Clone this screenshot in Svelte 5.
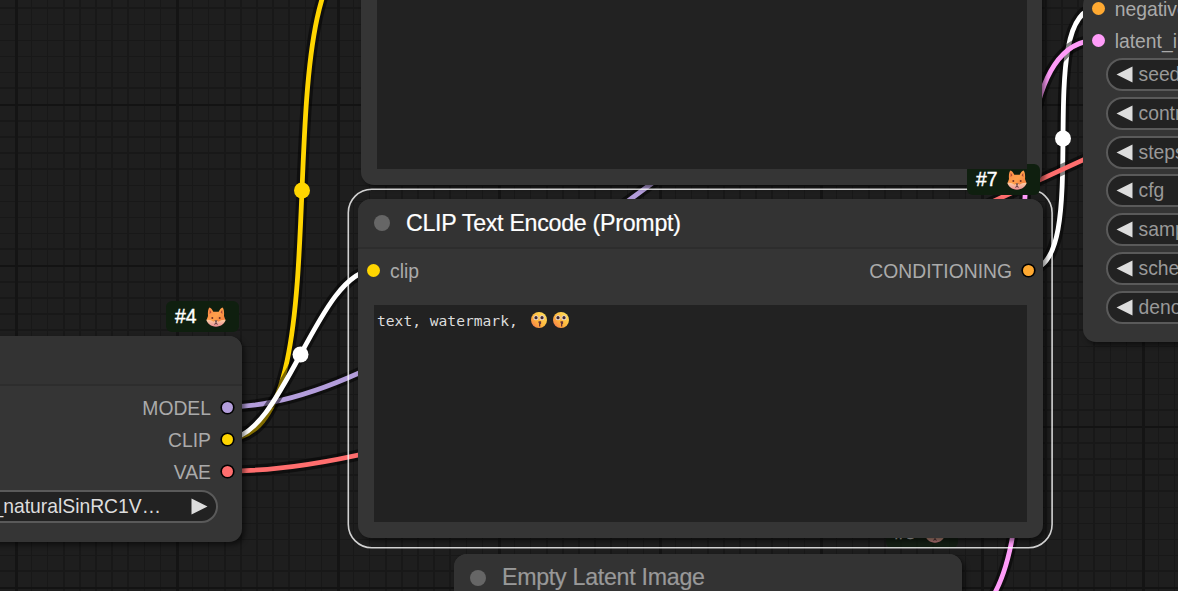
<script>
  const gridX = [31, 47, 63, 79, 95, 111, 127, 144, 160];
  const gridY = [120, 136, 152, 168, 185, 201, 217, 233, 249];
  const lines = [];
  for (let t = -1; t < 8; t++) {
    gridX.forEach((v, i) => lines.push({ x: v + t * 161, y: 0, w: i > 1 && i < 7 ? 2 : 1, h: 591, c: '#181818' }));
    gridY.forEach((v, i) => lines.push({ x: 0, y: v + (t - 2) * 161 + (i === 8 ? -1 : 0), w: 1178, h: i < 4 || i === 8 ? 2 : 1, c: '#181818' }));
  }
  for (let t = 0; t < 8; t++) {
    lines.push({ x: 15 + t * 161, y: 0, w: 3, h: 591, c: '#141414' });
    lines.push({ x: 0, y: 104 + t * 161, w: 1178, h: 2, c: '#131313' });
  }

  const links = [
    { d: 'M1028 270C1096 270 1030 8 1098 8', c: '#fff' },
    { d: 'M227 471C605 471 1278 -20 1656 -20', c: '#ff6e6e' },
    { d: 'M947 625C1098 625 947 40 1098 40', c: '#ff9cf9' },
    { d: 'M227 439C357 439 247 -59 377 -59', c: '#ffd500' },
    { d: 'M227 407C474 407 851 -56 1098 -56', c: '#b39ddb' },
    { d: 'M227 439C283 439 318 270 374 270', c: '#fff' }
  ];
  const dots = [
    { x: 302, y: 190.5, c: '#ffd500' },
    { x: 300.5, y: 354.5, c: '#fff' },
    { x: 1063, y: 138.5, c: '#fff' }
  ];
  const outputs = [
    { name: 'MODEL', c: '#b39ddb' },
    { name: 'CLIP', c: '#ffd500' },
    { name: 'VAE', c: '#ff6e6e' }
  ];
  const widgets = ['seed', 'control_after_generate', 'steps', 'cfg', 'sampler_name', 'scheduler', 'denoise'];
</script>

{#snippet badge(id, cls)}
  <div class="badge {cls}">
    <span>#{id}</span>
    <svg class="fox" viewBox="0 0 20 20">
      <defs>
        <linearGradient id="fur{id}" x1="0" y1="0" x2="1" y2="1">
          <stop offset="0" stop-color="#ff8a45" />
          <stop offset=".5" stop-color="#ffa04c" />
          <stop offset="1" stop-color="#ef6c35" />
        </linearGradient>
        <linearGradient id="cheek{id}" x1="0" y1="0" x2="0" y2="1">
          <stop offset="0" stop-color="#ffd0a4" />
          <stop offset="1" stop-color="#eb8c94" />
        </linearGradient>
      </defs>
      <path d="M2 9C1.600 5 2.200 1.500 3.400.4 4.900.9 6.600 2.800 7.300 4.700h5.400C13.400 2.800 15.100.9 16.600.4 17.800 1.500 18.400 5 18 9l1.400 4-4 5H4.600l-4-5z" fill="url(#fur{id})" />
      <path d="M3.700 3c.8.6 1.400 1.500 1.700 2.500L3.600 7zM16.300 3c-.8.6-1.400 1.500-1.700 2.500L16.400 7z" fill="#b54c38" />
      <path d="M.3 12.800c2.700-.3 5.500.5 7.300 1.900L10 13.200l2.400 1.500c1.800-1.400 4.600-2.200 7.300-1.900-.8 3.500-4.700 6.900-9.700 6.900S1.100 16.300.3 12.800z" fill="url(#cheek{id})" />
      <circle cx="6.300" cy="11" r="1" fill="#713128" />
      <circle cx="13.700" cy="11" r="1" fill="#713128" />
      <path d="M8.500 13.500h3L10 15.300z" fill="#35232c" />
      <path d="M10 15v1.600M8.300 17.300l1.700-.8 1.700.8" fill="none" stroke="#4b2933" stroke-width=".9" />
    </svg>
  </div>
{/snippet}

{#snippet face(n)}
  <svg class="face" viewBox="0 0 16 16">
    <defs>
      <linearGradient id="skin{n}" x1="1" y1="0" x2="0" y2="1">
        <stop offset="0" stop-color="#ffe860" />
        <stop offset=".6" stop-color="#ffb13a" />
        <stop offset="1" stop-color="#f36f55" />
      </linearGradient>
    </defs>
    <circle cx="8" cy="8" r="8" fill="url(#skin{n})" />
    <circle cx="5" cy="5.700" r="2.500" fill="#e9d8d0" />
    <circle cx="11" cy="5.700" r="2.500" fill="#e9d8d0" />
    <circle cx="5" cy="5.700" r="1.600" fill="#402a32" />
    <circle cx="11" cy="5.700" r="1.600" fill="#402a32" />
    <path d="M7.500 9.200h2.600v2.500l-.8.600v2.100H8v-3.200l-.5-.3z" fill="#67353a" />
  </svg>
{/snippet}

<div class="canvas">
  <svg class="layer" width="1178" height="591">
    <rect width="1178" height="591" fill="#1e1e1e" />
    <g shape-rendering="crispEdges">
      {#each lines as l}
        <rect x={l.x} y={l.y} width={l.w} height={l.h} fill={l.c} />
      {/each}
    </g>
    <g fill="none">
      {#each links as l}
        <path d={l.d} stroke="#000" stroke-opacity=".5" stroke-width="11.300" />
        <path d={l.d} stroke={l.c} stroke-width="4.800" />
      {/each}
    </g>
    {#each dots as p}
      <circle cx={p.x} cy={p.y} r="8" fill={p.c} />
    {/each}
  </svg>

  <section class="node loader">
    <header></header>
    <div class="rows">
      {#each outputs as o}
        <div class="slot out">
          <span>{o.name}</span>
          <i class="pin ring" style="background:{o.c}"></i>
        </div>
      {/each}
    </div>
    <div class="pill value">
      <span>juggernautXL_naturalSinRC1V…</span>
      <svg width="17" height="17"><path d="M.5.500L16.500 8.500L.5 16.500z" fill="#ddd" /></svg>
    </div>
  </section>
  {@render badge(4, 'b4')}

  <section class="node positive"></section>

  <section class="node sampler">
    <div class="slot"><i class="pin" style="background:#ffa931"></i><span>negative</span></div>
    <div class="slot"><i class="pin" style="background:#ff9cf9"></i><span>latent_image</span></div>
    <div class="stack">
      {#each widgets as w}
        <div class="pill">
          <svg width="17" height="17"><path d="M16.500.500L.5 8.500L16.500 16.500z" fill="#ddd" /></svg>
          <span>{w}</span>
        </div>
      {/each}
    </div>
  </section>

  <section class="node latent">
    <header><i class="state"></i><h2>Empty Latent Image</h2></header>
  </section>
  {@render badge(5, 'b5')}

  <section class="node encode">
    <header><i class="state"></i><h2>CLIP Text Encode (Prompt)</h2></header>
    <div class="slot both">
      <i class="pin" style="background:#ffd500"></i>
      <span>clip</span>
      <span class="right">CONDITIONING</span>
      <i class="pin ring" style="background:#ffa931"></i>
    </div>
    <div class="prompt"><span>text, watermark,</span>{@render face(1)}{@render face(2)}</div>
  </section>
  <svg class="layer" width="1178" height="591">
    <rect x="348.300" y="189.200" width="703.800" height="358.500" rx="23.500" fill="none" stroke="#fff" stroke-opacity=".8" stroke-width="1.610" />
  </svg>
  {@render badge(7, 'b7')}
  <div class="upper-prompt"></div>
</div>

<style>
  :global(body) { background: #1e1e1e; overflow: hidden; }
  .canvas {
    position: relative;
    width: 1178px;
    height: 591px;
    overflow: hidden;
    font-family: "Liberation Sans", Arial, sans-serif;
    font-size: 19.32px;
    color: #aaa;
    white-space: nowrap;
  }
  .layer { position: absolute; inset: 0; }
  .node {
    position: absolute;
    box-sizing: border-box;
    background: #353535;
    border-radius: 13px;
    box-shadow: 3px 3px 5px rgba(0, 0, 0, .5);
  }
  header {
    height: 48px;
    box-sizing: content-box;
    border-bottom: 2px solid #2d2d2d;
    background: #333;
    border-radius: 13px 13px 0 0;
    display: flex;
    align-items: center;
    padding-left: 16px;
    gap: 16px;
  }
  h2 {
    margin: 0;
    font-size: 23.200px;
    letter-spacing: -.27px;
    font-weight: 400;
    line-height: 48px;
    position: relative;
    top: -.5px;
    -webkit-text-stroke: .2px currentColor;
  }
  .state { width: 16px; height: 16px; border-radius: 50%; background: #666; }
  .slot { display: flex; align-items: center; height: 32.200px; line-height: 32.200px; }
  .slot span { position: relative; top: 1.500px; }
  .pin { width: 13px; height: 13px; border-radius: 50%; flex: none; }
  .pin.ring { width: 11px; height: 11px; margin: 0 1.500px; box-shadow: 0 0 0 1.600px #000; }

  .loader { left: -267px; top: 336px; width: 509px; height: 206px; }
  .rows { padding: 5px 8px 0 0; }
  .out { justify-content: flex-end; gap: 9px; }
  .pill {
    box-sizing: border-box;
    height: 33px;
    border: 2px solid #5a5a5a;
    border-radius: 17px;
    background: #222;
    display: flex;
    align-items: center;
  }
  .value { color: #ddd; margin: 2.500px 24px 0; justify-content: flex-end; gap: 30px; padding-right: 8px; }

  .positive { left: 361px; top: -150px; width: 681px; height: 334.500px; }
  .upper-prompt { position: absolute; left: 377px; top: 0; width: 650px; height: 169px; background: #222; }

  .sampler { left: 1083px; top: -8px; width: 507px; height: 350px; }
  .sampler .slot { padding-left: 9px; gap: 9.700px; }
  .stack { display: grid; row-gap: 5.700px; padding: 2px 24px 0 23.300px; }
  .stack .pill { gap: 5.500px; padding-left: 7.700px; color: #999; }
  .stack span { position: relative; top: .5px; }

  .latent { left: 454px; top: 553.500px; width: 508px; height: 170px; color: #999; }

  .encode { left: 358px; top: 199px; width: 685px; height: 339px; }
  .encode h2 { color: #fff; }
  .both { padding: 5px 8px 0 9px; }
  .both span { margin-left: 10px; }
  .both .right { margin: 0 9px 0 auto; }
  .prompt {
    margin: 19px 16.500px 0 16px;
    height: 217px;
    box-sizing: border-box;
    background: #222;
    padding: 7px 3px;
    color: #ddd;
    font: 14.620px/17px "DejaVu Sans Mono", "Liberation Mono", monospace;
    white-space: pre;
    display: flex;
    align-items: flex-start;
  }
  .face { width: 16px; height: 16px; margin-left: 13px; }
  .face + .face { margin-left: 6px; }

  .badge {
    position: absolute;
    width: 72.500px;
    height: 31px;
    box-sizing: border-box;
    padding-left: 9px;
    display: flex;
    align-items: center;
    gap: 9.500px;
    border-radius: 6px;
    background: #0f1f0f;
    color: #fff;
    -webkit-text-stroke: .4px #fff;
  }
  .fox { width: 20px; height: 20px; -webkit-text-stroke: 0; }
  .b4 { left: 166px; top: 301px; }
  .b5 { left: 885.500px; top: 517px; opacity: .7; }
  .b7 { left: 967px; top: 164px; }
</style>
